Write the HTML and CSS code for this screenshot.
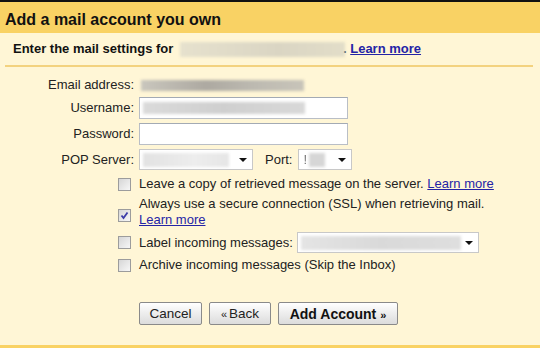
FILE: index.html
```html
<!DOCTYPE html>
<html lang="en">
<head>
  <meta charset="utf-8">
  <title>Add a mail account you own</title>
  <link rel="stylesheet" href="styles.css">
</head>
<body>
  <div class="page">
    <h1 class="title">Add a mail account you own</h1>

    <div class="intro">
      Enter the mail settings for <span class="blur blur-intro"></span>. <a href="#" class="link">Learn more</a>
    </div>

    <div class="fields">
      <span class="field-label">Email address:</span>
      <div class="field-value"><span class="blur blur-email"></span></div>

      <label class="field-label" for="username">Username:</label>
      <div class="input" id="username"><span class="blur blur-user"></span></div>

      <label class="field-label" for="password">Password:</label>
      <div class="input" id="password"></div>

      <label class="field-label">POP Server:</label>
      <div class="server-row">
        <div class="select select-pop">
          <span class="blur blur-pop"></span>
          <span class="arrow"></span>
        </div>
        <span class="port-label">Port:</span>
        <div class="select select-port">
          <span class="port-digit">!</span><span class="blur blur-port"></span>
          <span class="arrow"></span>
        </div>
      </div>
    </div>

    <ul class="options">
      <li class="option">
        <span class="checkbox"></span>
        <span>Leave a copy of retrieved message on the server. <a href="#" class="link link-plain">Learn more</a></span>
      </li>
      <li class="option">
        <span class="checkbox checkbox-checked">
          <svg viewBox="0 0 11 11" aria-hidden="true"><path d="M2.5 5.5 4.5 8 8.5 2.5"/></svg>
        </span>
        <span>Always use a secure connection (SSL) when retrieving mail.<br><a href="#" class="link link-plain">Learn more</a></span>
      </li>
      <li class="option">
        <span class="checkbox"></span>
        <span>Label incoming messages:</span>
        <div class="select select-label">
          <span class="blur blur-label"></span>
          <span class="arrow"></span>
        </div>
      </li>
      <li class="option">
        <span class="checkbox"></span>
        <span>Archive incoming messages (Skip the Inbox)</span>
      </li>
    </ul>

    <div class="actions">
      <button class="button button-cancel">Cancel</button>
      <button class="button button-back"><span class="quote">«</span>Back</button>
      <button class="button button-add">Add Account <span class="quote">»</span></button>
    </div>
  </div>
</body>
</html>
```

FILE: styles.css
```css
*, *::before, *::after {
  margin: 0;
  padding: 0;
  box-sizing: border-box;
}

body {
  background-color: #FFF6D6;
  color: #222222;
  font-family: "Liberation Sans", Arial, sans-serif;
  font-size: 13px;
  line-height: 16px;
}

.page {
  height: 348px;
  border-top: 2px solid #111111;
  border-bottom: 3px solid #F9D264;
}

.title {
  height: 31px;
  padding: 4px 5px 0;
  background-color: #F9D264;
  color: #111111;
  font-size: 16px;
  line-height: 27px;
  font-weight: bold;
}

.intro {
  margin: 0 7px 0 5px;
  padding: 8px 8px 8px;
  border-bottom: 2px solid #F3D27F;
  color: #111111;
  font-weight: bold;
}

.link {
  color: #2424A6;
  text-decoration: underline;
}

.link-plain {
  font-weight: normal;
}

.blur {
  display: inline-block;
  vertical-align: middle;
  filter: blur(1.5px);
}

.blur-intro {
  width: 165px;
  height: 15px;
  margin-left: 3px;
  margin-right: -2px;
  background: linear-gradient(90deg, #E6E1CD, #DAD5C3 60%, #E2DDC8);
}

.blur-email {
  width: 163px;
  height: 11px;
  background: linear-gradient(90deg, #C9C6BD, #ADA9A1 40%, #BDBAB1 70%, #C8C4B9);
}

.blur-user {
  width: 162px;
  height: 12px;
  background: linear-gradient(90deg, #DADADA, #CFCFCF 50%, #D8D8D8);
}

.blur-pop {
  width: 86px;
  height: 14px;
  background: linear-gradient(90deg, #E2E2E2, #EDEDED 60%, #E6E6E6);
}

.blur-port {
  width: 16px;
  height: 14px;
  background-color: #D6D6D6;
}

.blur-label {
  width: 160px;
  height: 14px;
  background: linear-gradient(90deg, #E4E4E4, #D9D9D9 50%, #DEDEDE);
}

.fields {
  display: grid;
  grid-template-columns: 134px 1fr;
  column-gap: 5px;
  row-gap: 4px;
  align-items: center;
  margin-top: 10px;
}

.field-label {
  text-align: right;
}

.field-value {
  padding-left: 2px;
}

.input {
  width: 209px;
  height: 22px;
  padding: 0 3px;
  display: flex;
  align-items: center;
  background-color: #FFFFFF;
  border: 1px solid #B9BEC6;
  border-top-color: #A3AAB4;
}

.server-row {
  display: flex;
  align-items: center;
}

.select {
  position: relative;
  height: 21px;
  padding: 0 3px;
  display: flex;
  align-items: center;
  background-color: #FFFFFF;
  border: 1px solid #C8C8C8;
}

.arrow {
  position: absolute;
  right: 5px;
  top: 8px;
  border-left: 4px solid transparent;
  border-right: 4px solid transparent;
  border-top: 4px solid #111111;
}

.select-pop {
  width: 114px;
}

.port-label {
  margin: 0 6px 0 12px;
}

.select-port {
  width: 54px;
  padding-left: 4px;
}

.port-digit {
  color: #777777;
  margin-right: 2px;
  filter: blur(0.6px);
}

.select-label {
  width: 182px;
  margin-left: 4px;
}

.options {
  list-style: none;
  margin-top: 6px;
  padding-left: 118px;
  display: flex;
  flex-direction: column;
  gap: 4px;
}

.option {
  display: flex;
  align-items: center;
  min-height: 16px;
}

.checkbox {
  flex: none;
  width: 13px;
  height: 13px;
  margin-right: 8px;
  border: 1px solid #9C9C9C;
  background: linear-gradient(135deg, #D6D6D6, #F7F7F7);
}

.checkbox-checked {
  margin-top: 6px;
}

.checkbox-checked svg {
  display: block;
  width: 11px;
  height: 11px;
  fill: none;
  stroke: #3C3CA8;
  stroke-width: 1.8;
}

.actions {
  display: flex;
  gap: 7px;
  margin-top: 29px;
  padding-left: 139px;
}

.button {
  height: 23px;
  padding: 0 8px;
  border: 1px solid #8A8A8A;
  border-radius: 2px;
  background: linear-gradient(#FFFFFF, #EDEDED 50%, #DCDCDC);
  color: #222222;
  font-family: inherit;
  font-size: 13.5px;
}

.button-cancel {
  width: 63px;
}

.button-back {
  width: 62px;
}

.button-add {
  width: 120px;
  font-size: 14px;
  font-weight: bold;
  color: #111111;
}

.quote {
  font-size: 11px;
}

.button-back .quote {
  margin-right: 2px;
}
```
